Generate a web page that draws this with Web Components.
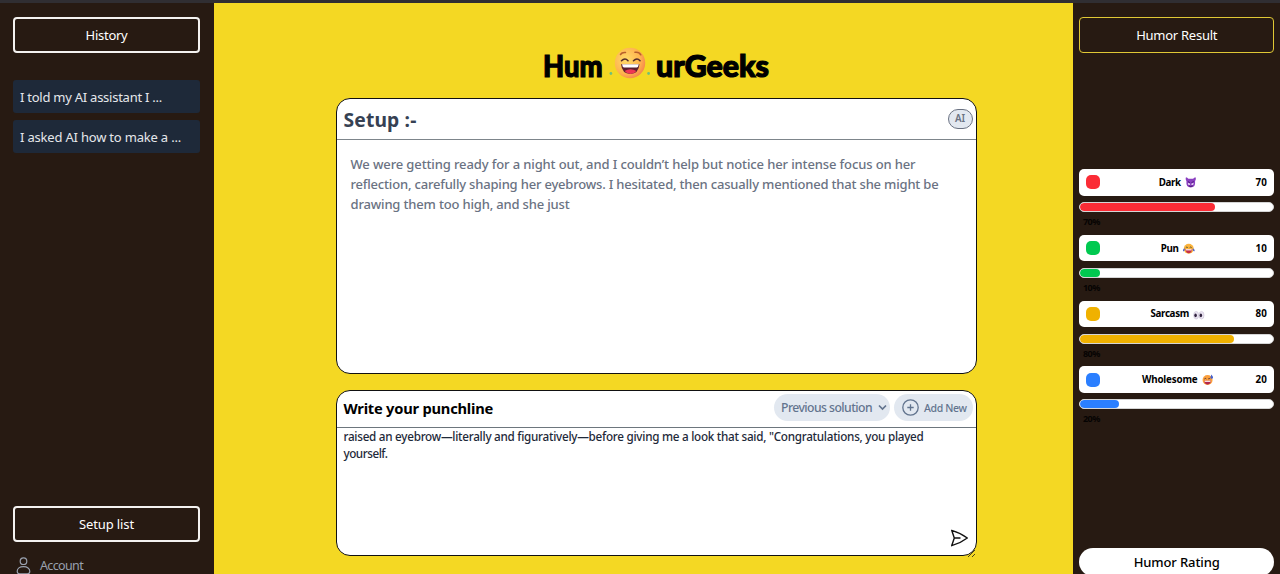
<!DOCTYPE html>
<html lang="en">
<head>
<meta charset="utf-8">
<title>HumourGeeks</title>
<style>
html,body{margin:0;height:100%;overflow:hidden}
body{font-family:"Noto Sans","Open Sans",sans-serif;background:#271a12;color:#000}
</style>
</head>
<body>
<humour-app></humour-app>
<script>
const define = (name, html, init) => customElements.define(name, class extends HTMLElement {
  connectedCallback() {
    if (this.shadowRoot) return;
    const t = document.createElement('template');
    t.innerHTML = typeof html === 'function' ? html(this) : html;
    this.attachShadow({mode: 'open'}).append(t.content.cloneNode(true));
    if (init) init(this);
  }
});

/* Single line of text set to an exact measure, by tracking or by horizontal scale. */
define('fit-text', e => `<style>
:host{display:inline-block;white-space:nowrap;flex:none;width:${e.getAttribute('w')}px}
span{display:inline-block;transform-origin:0 50%}</style><span><slot></slot></span>`, e => {
  const s = e.shadowRoot.querySelector('span'), w = +e.getAttribute('w');
  const n = s.getBoundingClientRect().width;
  if (!n) return;
  if (e.hasAttribute('scale')) s.style.transform = `scaleX(${w / n})`;
  else s.style.letterSpacing = (w - n) / e.textContent.length + 'px';
});

define('outline-button', `<style>
:host{display:flex;box-sizing:border-box;height:36px;align-items:center;justify-content:center;border:var(--edge-width,2px) solid var(--edge,#f4f2f0);border-radius:4px;color:#fff;font-size:13px;line-height:18px}
</style><slot></slot>`);

define('history-item', `<style>
:host{display:flex;box-sizing:border-box;height:33px;align-items:center;padding-left:7px;background:#1e2939;border-radius:3px;color:#e5e7eb;font-size:13px;line-height:18px}
</style><slot></slot>`);

define('history-panel', `<style>
:host{display:flex;flex-direction:column;box-sizing:border-box;width:213.5px;padding:14px 13.5px 0 13px;flex:none}
.list{display:flex;flex-direction:column;gap:7px;margin-top:27px;flex:1}
.account{display:flex;align-items:center;height:32px;margin:8px 0 -8px;padding-left:3px;gap:9px;color:#99a1af;font-size:12.5px;line-height:18px;flex:none}
svg{width:15px;height:18px}
</style>
<outline-button><fit-text w="42">History</fit-text></outline-button>
<div class="list">
<history-item><fit-text w="142">I told my AI assistant I ...</fit-text></history-item>
<history-item><fit-text w="161">I asked AI how to make a ...</fit-text></history-item>
</div>
<outline-button><fit-text w="55">Setup list</fit-text></outline-button>
<div class="account"><svg viewBox="0 0 15 18" fill="none" stroke="#99a1af" stroke-width="1.2"><circle cx="7.5" cy="4.2" r="3.3"/><path d="M1.2 14.2C1.2 11.500 3.700 9.700 7.500 9.700s6.300 1.800 6.300 4.500c0 2-1.300 2.700-2.500 2.700H3.700c-1.200 0-2.500-.7-2.500-2.700z"/></svg><fit-text w="43">Account</fit-text></div>`);

define('brand-logo', `<style>
:host{display:flex;height:37px;width:226px;align-items:flex-start;font:900 30px/37px Lato,sans-serif;-webkit-text-stroke:1.2px #000}
svg{width:42px;height:34px;margin:0 5.500px 0 6px;flex:none}
.t{flex:none}
</style>
<fit-text class="t" scale w="59.500">Hum</fit-text>
<svg viewBox="0 0 42 34"><defs><radialGradient id="g" cx=".38" cy=".4" r=".7"><stop offset="0" stop-color="#ffdc69"/><stop offset=".65" stop-color="#ffb44e"/><stop offset="1" stop-color="#f47b4c"/></radialGradient></defs>
<circle cx="21" cy="16" r="15.200" fill="url(#g)"/>
<g fill="none" stroke-linecap="round"><path d="M11.500 7.500q1.500-2.500 5-2M26 5.300q4-.7 5.800 2.500" stroke="#b8602b" stroke-width="1.500"/><path d="M12.500 13.700q3.500-3.500 6.500 0M24.500 13.700q3.500-3.500 6.500 0" stroke="#542b2b" stroke-width="1.600"/></g>
<path d="M12 17.300h18.500q-1 9.700-9.200 9.700T12 17.300z" fill="#5b2030"/><path d="M13 17.300h16.800q-.5 3.200-2 3.200H15q-1.500 0-2-3.200z" fill="#fff"/><path d="M15.500 24q6-3.500 12 0-2.500 3-6 3t-6-3z" fill="#ef3654"/>
<circle cx="1.900" cy="26.500" r="1.400" fill="#6fc07c"/><circle cx="39.600" cy="26.500" r="1.400" fill="#6fc07c"/></svg>
<fit-text class="t" scale w="113">urGeeks</fit-text>`);

define('setup-card', `<style>
:host{display:flex;flex-direction:column;box-sizing:border-box;height:276px;background:#fff;border:1px solid #111;border-radius:14px;overflow:hidden}
header{display:flex;box-sizing:border-box;height:41px;align-items:center;justify-content:space-between;padding:0 3px 0 6.500px;border-bottom:1px solid #7d858b;flex:none}
h1{margin:2px 0 0;font-size:19.300px;line-height:26px;color:#364153;font-weight:700}
.ai{display:flex;box-sizing:border-box;width:25px;height:20px;border:1px solid #6a7282;border-radius:10px;background:#e2e8f0;color:#6a7282;font-size:9.800px;font-weight:600;line-height:14px;align-items:center;justify-content:center}
.body{display:flex;flex-direction:column;padding:14px 13.500px;color:#6a7282;font-size:13px;line-height:20px;font-weight:500}
</style>
<header><h1><fit-text w="73">Setup :-</fit-text></h1><span class="ai"><fit-text w="10">AI</fit-text></span></header>
<div class="body">
<fit-text w="565">We were getting ready for a night out, and I couldn’t help but notice her intense focus on her</fit-text>
<fit-text w="588">reflection, carefully shaping her eyebrows. I hesitated, then casually mentioned that she might be</fit-text>
<fit-text w="219">drawing them too high, and she just</fit-text>
</div>`);

define('pill-button', `<style>
:host{display:flex;box-sizing:border-box;height:27px;border-radius:14px;background:#e2e8f0;color:#62748e;align-items:center;font-weight:500;line-height:18px}
</style><slot></slot>`);

define('punchline-card', `<style>
:host{display:flex;flex-direction:column;position:relative;box-sizing:border-box;height:166px;background:#fff;border:1px solid #111;border-radius:14px}
header{display:flex;box-sizing:border-box;height:37px;align-items:center;padding:0 3px 3px 6.500px;border-bottom:1px solid #6d767d;gap:4px;flex:none}
h2{flex:1;margin:0;font-size:14.700px;line-height:20px;font-weight:700}
.prev{width:116px;padding-left:7px;gap:6px;font-size:12.200px}
.add{width:78.500px;padding-left:8px;gap:5px;font-size:10.500px}
.body{display:flex;flex-direction:column;flex:1;padding:0 6.500px;font-size:11.700px;line-height:17px;font-weight:500;color:#1e2939}
.send{width:19px;height:18px;align-self:flex-end;margin:auto 0 8.500px}
.grip{position:absolute;right:0;bottom:-3px;width:9px;height:9px}
svg{flex:none;fill:none}
</style>
<header><h2><fit-text w="149.500">Write your punchline</fit-text></h2>
<pill-button class="prev"><fit-text w="91">Previous solution</fit-text><svg width="9" height="7" viewBox="0 0 9 7" stroke="#62748e" stroke-width="1.700"><path d="M1 1.500 4.500 5 8 1.500"/></svg></pill-button>
<pill-button class="add"><svg width="17" height="17" viewBox="0 0 17 17" stroke="#62748e" stroke-width="1.300"><circle cx="8.500" cy="8.500" r="7.700"/><path d="M5.300 8.500h6.400M8.500 5.300v6.400"/></svg><fit-text w="42.500">Add New</fit-text></pill-button></header>
<div class="body">
<fit-text w="580">raised an eyebrow—literally and figuratively—before giving me a look that said, "Congratulations, you played</fit-text>
<fit-text w="44">yourself.</fit-text>
<svg class="send" viewBox="0 0 19 18" stroke="#111" stroke-width="1.400" stroke-linejoin="round" stroke-linecap="round"><path d="M4.300 9 1.700 1.300Q10.500 3.800 17.300 9 10.500 14.200 1.700 16.700ZH10"/></svg>
</div>
<svg class="grip" viewBox="0 0 9 9" stroke="#4a4519" stroke-width="1"><path d="M1 8 8 1M5 8 8 5"/></svg>`);

const faces = {
dark: `<path d="M1.500 4.500Q0 2 1 .3q1.500.2 2.500 1.400h5Q9.500.5 11 .3q1 1.700-.5 4.200.7 6.500-4.500 6.500T1.500 4.500z" fill="#8a3fc0"/><path d="m3 4.700 2.300 1.300M9 4.700 6.700 6" stroke="#4a1d78"/><path d="M3 6.200 5.300 7v1H3.500zM9 6.200 6.700 7v1h1.800z" fill="#fff"/><path d="M4 9.300q2 1.200 4 0" stroke="#351354" stroke-width=".8"/>`,
pun: `<circle cx="6" cy="6" r="5.200" fill="#fbb33c"/><path d="M3 4.800q1-1.200 2 0M7 4.800q1-1.200 2 0" stroke="#553" /><path d="M2.500 6.500h7Q9 10.700 6 10.700T2.500 6.500z" fill="#c52f48"/><path d="M3 6.500h6v1.200H3z" fill="#fff"/><path d="M1.700 5.600Q-.8 7 0 8.500q1.800.7 2-2.300zM10.300 5.600q2.500 1.400 1.700 2.900-1.800.7-2-2.300z" fill="#5264c8"/>`,
sarcasm: `<ellipse cx="3.300" cy="6.500" rx="2.600" ry="4" fill="#eae4f1" stroke="#c9c0d3" stroke-width=".6"/><ellipse cx="8.900" cy="6.500" rx="2.600" ry="4" fill="#eae4f1" stroke="#c9c0d3" stroke-width=".6"/><ellipse cx="2.700" cy="6.600" rx="1.300" ry="2" fill="#32233f"/><ellipse cx="8.200" cy="6.600" rx="1.300" ry="2" fill="#32233f"/>`,
wholesome: `<circle cx="5.800" cy="6.300" r="5.200" fill="#fb9f3c"/><path d="M2.500 5.200q1-1.200 2 0M6.500 5.200q1-1.200 2 0" stroke="#533"/><path d="M2.300 7h7q-.5 4-3.500 4T2.300 7z" fill="#b3264d"/><path d="M2.800 7h6v1.200h-6z" fill="#fff"/><path d="M9.800.5q2.700 3 1.200 4.200-2 .8-2.300-1z" fill="#4561d0"/>`};

define('humor-meter', e => {
  const v = e.getAttribute('value');
  return `<style>
:host{display:flex;flex-direction:column;height:65.800px;font-weight:700;color:#000}
.card{display:flex;box-sizing:border-box;height:26.500px;background:#fff;border-radius:5px;align-items:center;justify-content:space-between;padding:1px 7px 0 6.500px;font-size:9.800px;line-height:14px;flex:none}
.dot{width:14px;height:14px;margin-top:-1px;border-radius:5px;background:${e.getAttribute('color')}}
.name{display:flex;align-items:center;gap:4.500px}
svg{width:11.500px;height:11.500px;fill:none}
.track{box-sizing:border-box;height:10px;margin-top:6.500px;border:1px solid #d5d5d5;border-radius:5px;background:#fff;overflow:hidden;flex:none}
.fill{height:100%;width:${v}%;border-radius:5px;background:${e.getAttribute('color')}}
.pct{padding:3px 0 0 3.500px;font-size:9px;line-height:13px;color:#050302}
</style><div class="card"><span class="dot"></span><span class="name"><fit-text w="${e.getAttribute('w')}">${e.getAttribute('label')}</fit-text><svg viewBox="0 0 12 12">${faces[e.getAttribute('face')]}</svg></span><fit-text w="11.500">${v}</fit-text></div>
<div class="track"><div class="fill"></div></div><div class="pct"><fit-text w="17">${v}%</fit-text></div>`;
});

define('result-panel', `<style>
:host{display:flex;flex-direction:column;box-sizing:border-box;width:207px;padding:14px 6px 0 6.400px;flex:none}
.meters{display:flex;flex-direction:column;margin-top:116px;flex:1}
.rating{display:flex;height:28px;border-radius:14px;background:#fff;align-items:center;justify-content:center;font-size:13px;line-height:18px;font-weight:500;margin-bottom:-2px;flex:none}
</style>
<outline-button style="--edge:#e0c835;--edge-width:1.500px"><fit-text w="81">Humor Result</fit-text></outline-button>
<div class="meters">
<humor-meter label="Dark" w="22" value="70" color="#fb2c36" face="dark"></humor-meter>
<humor-meter label="Pun" w="18" value="10" color="#00c950" face="pun"></humor-meter>
<humor-meter label="Sarcasm" w="38.500" value="80" color="#f0b100" face="sarcasm"></humor-meter>
<humor-meter label="Wholesome" w="55.500" value="20" color="#2b7fff" face="wholesome"></humor-meter>
</div>
<div class="rating"><fit-text w="86">Humor Rating</fit-text></div>`);

define('humour-app', `<style>
:host{display:flex;box-sizing:border-box;height:574px;border-top:3px solid #302e32;background:#271a12}
main{display:flex;flex-direction:column;flex:1;box-sizing:border-box;background:#f4d823;padding:44px 96.500px 0 122.500px}
brand-logo{align-self:center;margin-bottom:14px}
punchline-card{margin-top:16px}
</style>
<history-panel></history-panel>
<main><brand-logo></brand-logo><setup-card></setup-card><punchline-card></punchline-card></main>
<result-panel></result-panel>`);
</script>
</body>
</html>
